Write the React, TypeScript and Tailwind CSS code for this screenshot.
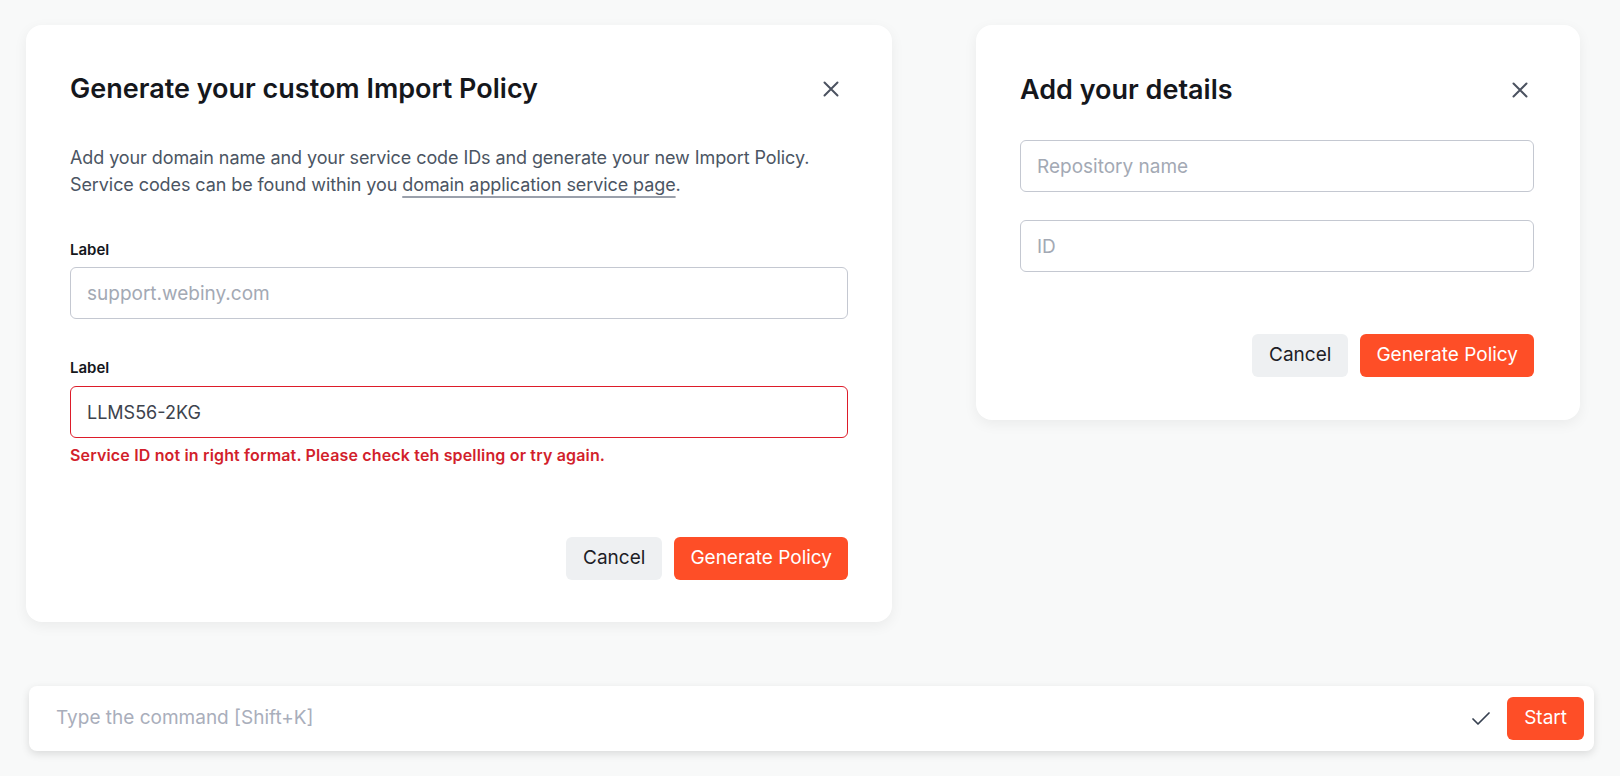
import { Check } from 'lucide-react';

function CloseIcon() {
  return (
    <svg width="16" height="16" viewBox="0 0 16 16" fill="none" stroke="#4b5260" strokeWidth="2" strokeLinecap="round">
      <path d="M1.5 1.5l13 13M14.5 1.5l-13 13" />
    </svg>
  );
}

function TextField({ placeholder, value, error }: { placeholder?: string; value?: string; error?: boolean }) {
  return (
    <input
      type="text"
      placeholder={placeholder}
      defaultValue={value}
      className={`block w-full h-[52px] rounded-md border bg-white px-4 text-[18px] text-[#3d434d] placeholder:text-[19px] placeholder:text-[#a3a9b4] outline-none ${
        error ? 'border-[#dd1c2a]' : 'border-[#c4c8d1]'
      }`}
    />
  );
}

function Actions() {
  return (
    <div className="flex justify-end gap-3">
      <button className="h-[43px] px-[17px] rounded-md bg-[#eef0f2] text-[19px] text-[#1d2026]">Cancel</button>
      <button className="h-[43px] px-4 rounded-md bg-[#fe4e27] text-[19px] text-white">Generate Policy</button>
    </div>
  );
}

function App() {
  return (
    <div className="min-h-screen bg-[#f8f9f9] pt-[25px] font-['Inter',sans-serif]">
      <div className="flex items-start pl-[26px]">
        {/* Import policy dialog */}
        <div className="w-[866px] rounded-2xl bg-white px-[44px] pt-[48px] pb-[42px] shadow-[0_4px_14px_rgba(0,0,0,0.06)]">
          <div className="flex items-center justify-between">
            <h2 className="text-[27px] leading-8 font-semibold text-[#15171c]">Generate your custom Import Policy</h2>
            <button className="mr-[9px]">
              <CloseIcon />
            </button>
          </div>
          <p className="mt-[39px] text-[18px] leading-[27px] tracking-[-0.005em] text-[#4b5563]">
            Add your domain name and your service code IDs and generate your new Import Policy.
            <br />
            Service codes can be found within you{' '}
            <a href="#" className="underline decoration-[#9aa0ab] decoration-[1.5px] underline-offset-[5px]">
              domain application service page
            </a>
            .
          </p>

          <label className="mt-[42px] mb-[7px] block text-[15px] leading-5 font-semibold text-[#15171c]">Label</label>
          <TextField placeholder="support.webiny.com" />

          <label className="mt-[39px] mb-[8px] block text-[15px] leading-5 font-semibold text-[#15171c]">Label</label>
          <TextField value="LLMS56-2KG" error />
          <p className="mt-[5px] text-[16px] leading-6 tracking-[0.01em] font-semibold text-[#d21f2c]">
            Service ID not in right format. Please check teh spelling or try again.
          </p>

          <div className="mt-[70px]">
            <Actions />
          </div>
        </div>

        {/* Details dialog */}
        <div className="ml-[84px] w-[604px] rounded-2xl bg-white pl-[44px] pr-[46px] pt-[49px] pb-[43px] shadow-[0_4px_14px_rgba(0,0,0,0.06)]">
          <div className="flex items-center justify-between">
            <h2 className="text-[27px] leading-8 font-semibold text-[#15171c]">Add your details</h2>
            <button className="mr-[6px]">
              <CloseIcon />
            </button>
          </div>
          <div className="mt-[34px]">
            <TextField placeholder="Repository name" />
          </div>
          <div className="mt-[28px]">
            <TextField placeholder="ID" />
          </div>
          <div className="mt-[62px]">
            <Actions />
          </div>
        </div>
      </div>

      {/* Command bar */}
      <div className="ml-[29px] mt-[64px] flex h-[65px] w-[1565px] items-center rounded-lg bg-white pl-[27px] pr-[10px] shadow-[0_3px_8px_rgba(0,0,0,0.12)]">
        <input
          type="text"
          placeholder="Type the command [Shift+K]"
          className="flex-1 bg-transparent text-[19px] text-[#3d434d] placeholder:text-[#a9aebb] outline-none"
        />
        <Check size={24} strokeWidth={1.75} className="text-[#374151]" />
        <button className="ml-[14px] h-[43px] px-[17px] rounded-md bg-[#fe4e27] text-[19px] text-white">Start</button>
      </div>
    </div>
  );
}

export default App;
